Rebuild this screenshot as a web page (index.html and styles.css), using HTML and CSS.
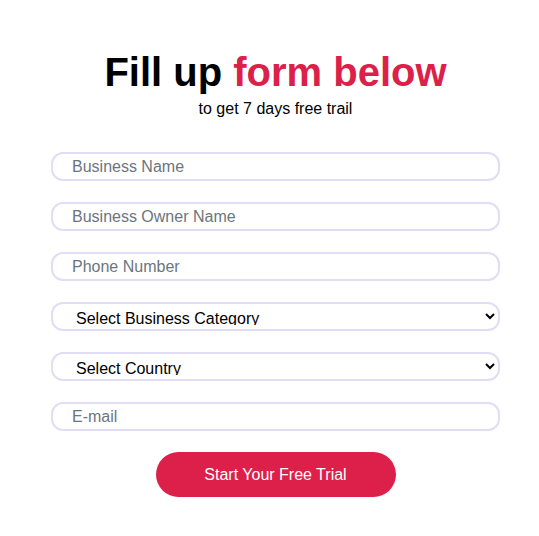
FILE: index.html
```html
<!DOCTYPE html>
<html lang="en">
<head>
    <meta charset="UTF-8">
    <title>Free Trial</title>
    <link rel="stylesheet" href="styles.css">
</head>
<body>
    <div class="wrapper">
        <header>
            <h1>Fill up <span class="accent">form below</span></h1>
            <p class="sub">to get 7 days free trail</p>
        </header>
        <form class="trial-form">
            <input type="text" placeholder="Business Name">
            <input type="text" placeholder="Business Owner Name">
            <input type="text" placeholder="Phone Number">
            <select>
                <option>Select Business Category</option>
            </select>
            <select>
                <option>Select Country</option>
            </select>
            <input type="email" placeholder="E-mail">
            <button type="button">Start Your Free Trial</button>
        </form>
    </div>
</body>
</html>
```

FILE: styles.css
```css
body {
    margin: 0;
    padding: 0;
    background-color: #fff;
    font-family: 'Liberation Sans', Arial, sans-serif;
    color: #000;
    overflow: hidden;
}
.wrapper {
    width: 550px;
    box-sizing: border-box;
    padding: 50px 50px 0 51px;
}
header {
    text-align: center;
}
h1 {
    font-size: 40px;
    font-weight: bold;
    margin: 0;
    line-height: 44px;
}
.accent {
    color: #dc2049;
}
.sub {
    font-size: 16px;
    margin: 6px 0 0;
}
.trial-form {
    display: flex;
    flex-direction: column;
    gap: 21px;
    margin-top: 34px;
}
input, select {
    box-sizing: border-box;
    width: 100%;
    height: 29px;
    border: 2px solid #e1ddf4;
    border-radius: 12px;
    font-family: 'Liberation Sans', Arial, sans-serif;
    font-size: 16px;
    background: #fff;
    outline: none;
}
input {
    padding: 0 19px;
    color: #000;
}
input::placeholder {
    color: #6c757d;
}
select {
    padding: 5px 8px 4px 19px;
    color: #000;
}
button {
    align-self: center;
    width: 240px;
    height: 45px;
    margin-top: 0;
    border: none;
    border-radius: 23px;
    background-color: #dc2049;
    color: #fff;
    font-family: 'Liberation Sans', Arial, sans-serif;
    font-size: 16px;
    cursor: pointer;
}
```
